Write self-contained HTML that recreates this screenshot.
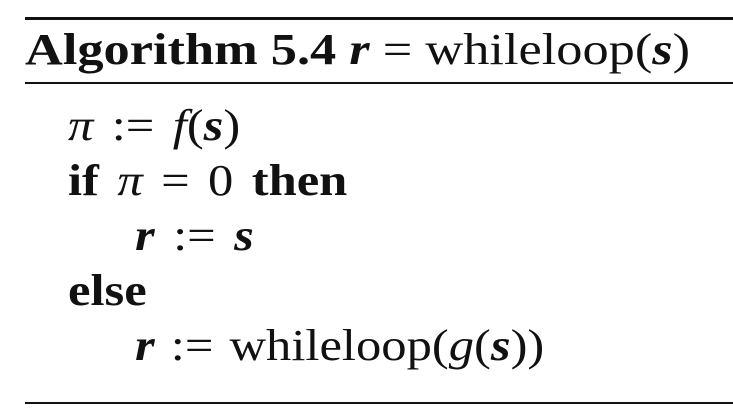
<!DOCTYPE html>
<html><head><style>
body{margin:0;width:733px;height:420px;background:#fff;position:relative;overflow:hidden;font-family:"Liberation Serif",serif;color:#111;}
.r{position:absolute;left:25px;right:0;background:#111;}
.l{position:absolute;font-size:44px;white-space:nowrap;line-height:1;transform-origin:0 0;transform:scaleX(1.15);word-spacing:5px;}
b{font-weight:bold}
.bi{font-weight:bold;font-style:italic}
i{font-style:italic}
</style></head><body>
<div class="r" style="top:17px;height:3px"></div>
<div class="l" style="left:25px;top:28px;transform:scaleX(1.19);word-spacing:0"><b>Algorithm 5.4</b> <span class="bi">r</span> = whileloop(<span class="bi">s</span>)</div>
<div class="r" style="top:82px;height:2px"></div>
<div class="l" style="left:68px;top:104px"><i>π</i> := <i>f</i>(<span class="bi">s</span>)</div>
<div class="l" style="left:68px;top:159px"><b>if</b> <i>π</i> = 0 <b>then</b></div>
<div class="l" style="left:135px;top:214px"><span class="bi">r</span> := <span class="bi">s</span></div>
<div class="l" style="left:68px;top:269px"><b>else</b></div>
<div class="l" style="left:135px;top:324px;word-spacing:3px"><span class="bi">r</span> := whileloop(<i>g</i>(<span class="bi">s</span>))</div>
<div class="r" style="top:402px;height:2px"></div>
</body></html>
